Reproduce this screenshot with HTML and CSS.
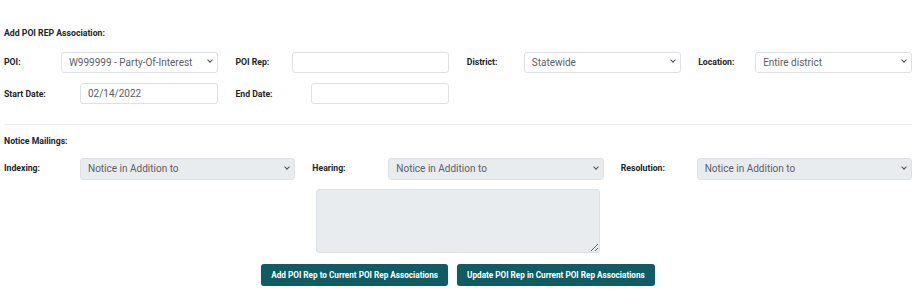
FILE: index.html
```html
<!DOCTYPE html>
<html lang="en">
<head>
    <meta charset="UTF-8">
    <meta name="viewport" content="width=device-width, initial-scale=1.0">
    <title>Add POI REP Association</title>
    <link rel="stylesheet" href="styles.css">
</head>
<body>
    <div class="assoc-form">
        <h4 class="section-title">Add POI REP Association:</h4>

        <div class="field-row quad">
            <div class="field">
                <label class="field-label">POI:</label>
                <div class="select-wrap">
                    <select class="form-control">
                        <option>W999999 - Party-Of-Interest Cases</option>
                    </select>
                </div>
            </div>
            <div class="field">
                <label class="field-label">POI Rep:</label>
                <input type="text" class="form-control">
            </div>
            <div class="field">
                <label class="field-label">District:</label>
                <div class="select-wrap">
                    <select class="form-control">
                        <option>Statewide</option>
                    </select>
                </div>
            </div>
            <div class="field">
                <label class="field-label">Location:</label>
                <div class="select-wrap">
                    <select class="form-control">
                        <option>Entire district</option>
                    </select>
                </div>
            </div>
        </div>

        <div class="field-row quad">
            <div class="field wide-label">
                <label class="field-label">Start Date:</label>
                <input type="text" class="form-control" value="02/14/2022">
            </div>
            <div class="field wide-label">
                <label class="field-label">End Date:</label>
                <input type="text" class="form-control">
            </div>
        </div>

        <hr class="divider">

        <h4 class="section-title">Notice Mailings:</h4>

        <div class="field-row triple">
            <div class="field wide-label">
                <label class="field-label">Indexing:</label>
                <div class="select-wrap">
                    <select class="form-control" disabled>
                        <option>Notice in Addition to</option>
                    </select>
                </div>
            </div>
            <div class="field wide-label">
                <label class="field-label">Hearing:</label>
                <div class="select-wrap">
                    <select class="form-control" disabled>
                        <option>Notice in Addition to</option>
                    </select>
                </div>
            </div>
            <div class="field wide-label">
                <label class="field-label">Resolution:</label>
                <div class="select-wrap">
                    <select class="form-control" disabled>
                        <option>Notice in Addition to</option>
                    </select>
                </div>
            </div>
        </div>

        <div class="notes">
            <textarea class="form-control notes-box" disabled></textarea>
        </div>

        <div class="actions">
            <button type="button" class="btn-teal">Add POI Rep to Current POI Rep Associations</button>
            <button type="button" class="btn-teal">Update POI Rep in Current POI Rep Associations</button>
        </div>
    </div>
</body>
</html>
```

FILE: styles.css
```css
body {
    margin: 0;
    background: #fff;
    font-family: Roboto, "Liberation Sans", Arial, sans-serif;
    color: #212529;
}

.assoc-form {
    padding: 27px 7px 0 4px;
}

.section-title {
    margin: 0;
    font-size: 8.7px;
    font-weight: 700;
    line-height: 12px;
}

.field-row {
    display: grid;
    column-gap: 17.5px;
    margin-top: 12px;
}

.field-row.quad {
    grid-template-columns: repeat(4, 1fr);
}

.field-row.quad + .field-row.quad {
    margin-top: 10px;
}

.field-row.triple {
    grid-template-columns: repeat(3, 1fr);
    column-gap: 17px;
    margin-top: 10px;
}

.field {
    display: flex;
    align-items: center;
}

.field-label {
    flex: 0 0 57px;
    font-size: 8.7px;
    font-weight: 700;
}

.field.wide-label .field-label {
    flex-basis: 76px;
}

.form-control {
    box-sizing: border-box;
    width: 100%;
    height: 21px;
    padding: 0 7px;
    border: 1px solid #dde1e5;
    border-radius: 3px;
    background: #fff;
    color: #5a6066;
    font-family: inherit;
    font-size: 10px;
}

.field-row.triple .form-control {
    height: 22px;
}

.field > .form-control,
.select-wrap {
    flex: 1;
    min-width: 0;
}

.select-wrap {
    position: relative;
}

.select-wrap select {
    appearance: none;
    -webkit-appearance: none;
    padding-right: 22px;
}

.select-wrap::after {
    content: "";
    position: absolute;
    right: 6px;
    top: 7px;
    width: 3px;
    height: 3px;
    border-right: 1px solid #4a4f55;
    border-bottom: 1px solid #4a4f55;
    transform: rotate(45deg);
    pointer-events: none;
}

.field-row.triple .select-wrap::after {
    top: 8px;
}

.form-control:disabled {
    background: #e9ecef;
    opacity: 1;
}

.divider {
    margin: 20px 0 0;
    border: 0;
    border-top: 1px solid #eceeef;
}

.divider + .section-title {
    margin-top: 10px;
}

.notes {
    display: flex;
    justify-content: center;
    margin-top: 9px;
}

.notes-box {
    width: 284px;
    height: 64px;
    padding: 5px 7px;
    resize: vertical;
}

.actions {
    display: flex;
    justify-content: center;
    gap: 9px;
    margin-top: 11px;
}

.btn-teal {
    height: 22px;
    padding: 0 10px;
    border: none;
    border-radius: 3px;
    background: #0f5c63;
    color: #fff;
    font-family: inherit;
    font-size: 8.2px;
    font-weight: 700;
    box-shadow: 0 1px 2px rgba(0, 0, 0, 0.15);
    cursor: pointer;
}

.btn-teal:hover {
    background: #0b4a50;
}
```
